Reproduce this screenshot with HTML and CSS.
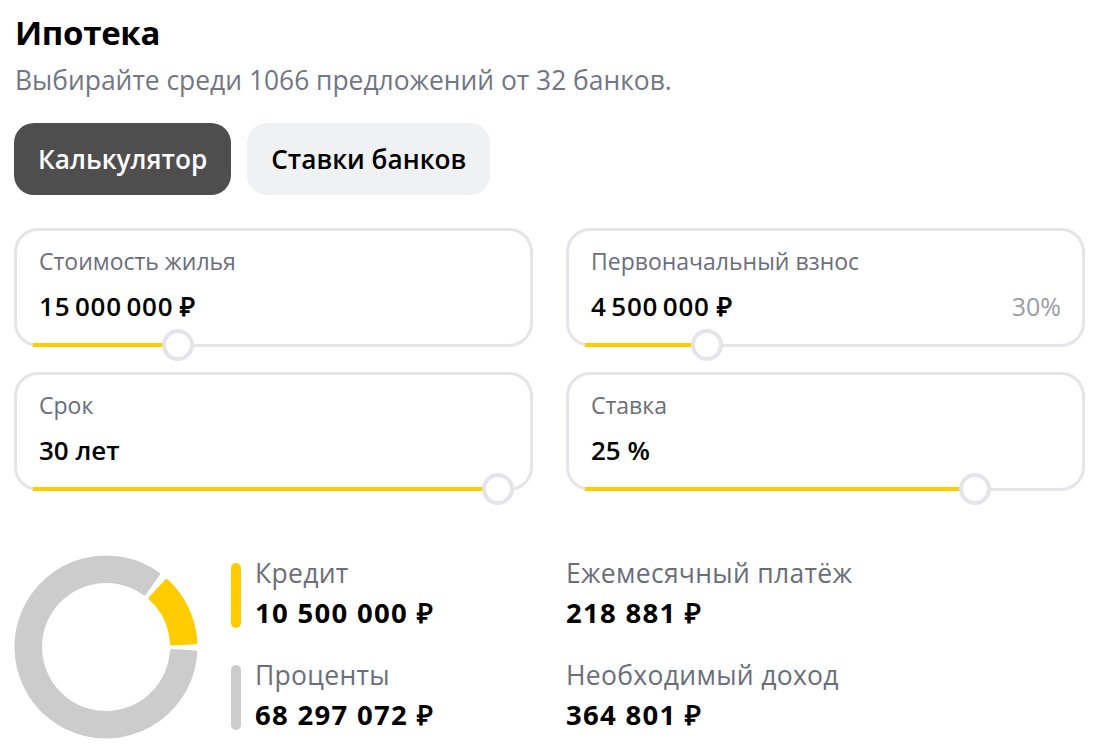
FILE: index.html
```html
<!DOCTYPE html>
<html lang="ru">
<head>
<meta charset="utf-8">
<title>Ипотека</title>
<link rel="stylesheet" href="styles.css">
</head>
<body>
<main class="page">
  <h1 class="title">Ипотека</h1>
  <p class="subtitle">Выбирайте среди 1066 предложений от 32 банков.</p>

  <div class="tabs">
    <button class="tab tab-active">Калькулятор</button>
    <button class="tab">Ставки банков</button>
  </div>

  <section class="fields">
    <div class="field">
      <div class="field-label">Стоимость жилья</div>
      <div class="field-row"><span class="field-value"><span class="num">15 000 000</span> ₽</span></div>
      <div class="slider"><div class="slider-fill" style="width: 145px"></div><div class="slider-thumb" style="left: 145px"></div></div>
    </div>
    <div class="field">
      <div class="field-label">Первоначальный взнос</div>
      <div class="field-row"><span class="field-value"><span class="num">4 500 000</span> ₽</span><span class="field-extra">30%</span></div>
      <div class="slider"><div class="slider-fill" style="width: 122px"></div><div class="slider-thumb" style="left: 122px"></div></div>
    </div>
    <div class="field">
      <div class="field-label">Срок</div>
      <div class="field-row"><span class="field-value">30 лет</span></div>
      <div class="slider"><div class="slider-fill" style="width: 465px"></div><div class="slider-thumb" style="left: 465px"></div></div>
    </div>
    <div class="field">
      <div class="field-label">Ставка</div>
      <div class="field-row"><span class="field-value">25 %</span></div>
      <div class="slider"><div class="slider-fill" style="width: 390px"></div><div class="slider-thumb" style="left: 390px"></div></div>
    </div>
  </section>

  <section class="summary">
    <div class="summary-left">
      <svg class="donut" width="184" height="184" viewBox="0 0 184 184" aria-hidden="true">
        <path fill="#cccccc" stroke="#cccccc" stroke-width="4" stroke-linejoin="round" d="M181.33 97.46 A89.5 89.5 0 1 1 143.97 19.14 L130.33 38.27 A66 66 0 1 0 157.88 96.03 Z"/>
        <path fill="#ffcc00" stroke="#ffcc00" stroke-width="4" stroke-linejoin="round" d="M152.47 26.01 A89.5 89.5 0 0 1 181.38 87.32 L157.91 88.55 A66 66 0 0 0 136.59 43.34 Z"/>
      </svg>
      <div class="legend">
        <div class="legend-item">
          <span class="legend-bar bar-yellow"></span>
          <div class="stat">
            <div class="stat-label">Кредит</div>
            <div class="stat-value">10 500 000 ₽</div>
          </div>
        </div>
        <div class="legend-item">
          <span class="legend-bar bar-gray"></span>
          <div class="stat">
            <div class="stat-label">Проценты</div>
            <div class="stat-value">68 297 072 ₽</div>
          </div>
        </div>
      </div>
    </div>
    <div class="summary-right">
      <div class="stat">
        <div class="stat-label">Ежемесячный платёж</div>
        <div class="stat-value">218 881 ₽</div>
      </div>
      <div class="stat">
        <div class="stat-label">Необходимый доход</div>
        <div class="stat-value">364 801 ₽</div>
      </div>
    </div>
  </section>
</main>
</body>
</html>
```

FILE: styles.css
```css
* { box-sizing: border-box; }

html, body {
  margin: 0;
  padding: 0;
  background: #ffffff;
}

body {
  font-family: "Open Sans", "Liberation Sans", Arial, sans-serif;
  color: #000000;
}

.page {
  padding: 14px 0 0 14px;
  width: 1085px;
}

.title {
  margin: 0;
  padding-left: 1px;
  font-size: 33px;
  line-height: 38px;
  font-weight: 700;
  letter-spacing: -0.3px;
}

.subtitle {
  margin: 12px 0 0;
  padding-left: 1px;
  font-size: 26.4px;
  line-height: 32px;
  color: #737684;
}

.tabs {
  display: flex;
  gap: 16px;
  margin-top: 27px;
}

.tab {
  height: 72px;
  padding: 0 24px;
  border: 0;
  border-radius: 20px;
  background: #f0f1f3;
  color: #000000;
  font-family: inherit;
  font-size: 26.2px;
  font-weight: 600;
}

.tab-active {
  background: #4e4e4e;
  color: #ffffff;
}

.fields {
  display: grid;
  grid-template-columns: 519px 519px;
  column-gap: 33px;
  row-gap: 25px;
  margin-top: 33px;
}

.field {
  position: relative;
  height: 119px;
  border: 3px solid #e4e4e9;
  border-radius: 24px;
  padding: 17px 21px 0 22px;
}

.field-label {
  font-size: 23px;
  line-height: 26px;
  color: #6b6e7a;
}

.field-row {
  display: flex;
  justify-content: space-between;
  align-items: baseline;
  margin-top: 17px;
}

.field-value {
  font-size: 26px;
  line-height: 30px;
  font-weight: 600;
}

.num {
  letter-spacing: 0.8px;
  word-spacing: -3px;
}

.field-extra {
  font-size: 25px;
  line-height: 30px;
  color: #9a9ca6;
}

.slider {
  position: absolute;
  left: 16px;
  right: 16px;
  bottom: -3px;
  height: 4px;
}

.slider-fill {
  position: absolute;
  left: 0;
  top: -0.5px;
  height: 4px;
  background: #ffcc00;
}

.slider-thumb {
  position: absolute;
  top: 2px;
  width: 32px;
  height: 32px;
  margin: -16px 0 0 -16px;
  border: 4px solid #e4e4e9;
  border-radius: 50%;
  background: #ffffff;
}

.summary {
  display: grid;
  grid-template-columns: 519px 519px;
  column-gap: 33px;
  margin-top: 64px;
}

.summary-left {
  display: flex;
  gap: 33px;
}

.donut {
  display: block;
  flex: none;
}

.legend {
  display: flex;
  flex-direction: column;
  gap: 37px;
  padding-top: 8px;
}

.legend-item {
  display: flex;
  gap: 14px;
}

.legend-bar {
  width: 10px;
  height: 65px;
  border-radius: 5px;
  flex: none;
}

.bar-yellow { background: #ffcc00; }
.bar-gray { background: #cccccc; }

.summary-right {
  display: flex;
  flex-direction: column;
  gap: 37px;
  padding-top: 8px;
}

.stat-label {
  font-size: 26.5px;
  line-height: 20px;
  letter-spacing: 0.3px;
  color: #6b6e7a;
}

.stat-value {
  margin-top: 15px;
  font-size: 27.5px;
  line-height: 30px;
  font-weight: 700;
  letter-spacing: 1.3px;
}
```
